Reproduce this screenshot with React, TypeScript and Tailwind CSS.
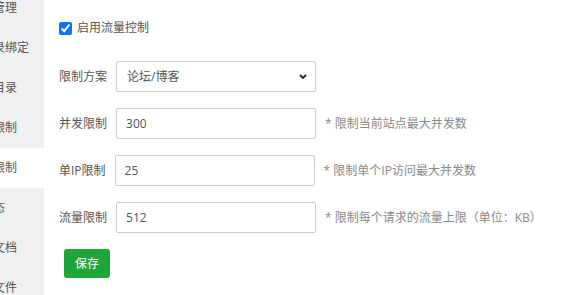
import React from "react";

const menu = ["域名管理", "子目录绑定", "网站目录", "访问限制", "流量限制", "伪静态", "默认文档", "配置文件"];

const rows = [
  { label: "并发限制", value: "300", hint: "* 限制当前站点最大并发数" },
  { label: "单IP限制", value: "25", hint: "* 限制单个IP访问最大并发数" },
  { label: "流量限制", value: "512", hint: "* 限制每个请求的流量上限（单位：KB）" },
];

export default function App() {
  return (
    <div
      className="flex w-[562px] h-[295px] overflow-hidden bg-white text-[12px] text-[#555]"
      style={{ fontFamily: '"Open Sans", "Noto Sans CJK SC", sans-serif' }}
    >
      {/* Left menu, scrolled off to the left */}
      <div className="w-[44px] shrink-0 overflow-hidden bg-[#f0f0f0]">
        <div className="-mt-[12px]">
          {menu.map((item, i) => (
            <div
              key={item}
              className={`h-[40px] flex items-center whitespace-nowrap -ml-[31px] ${
                i === 4 ? "bg-white w-[75px]" : ""
              }`}
            >
              {item}
            </div>
          ))}
        </div>
      </div>

      {/* Form */}
      <div className="flex-1 pt-[18px] pl-[15px]">
        <label className="h-[20px] flex items-center gap-[5px]">
          <input type="checkbox" defaultChecked className="w-[13px] h-[13px] m-0" />
          <span>启用流量控制</span>
        </label>

        <div className="mt-[23px] flex flex-col gap-[16px]">
          <div className="flex items-center h-[31px]">
            <span className="mr-[9px]">限制方案</span>
            <div className="relative w-[200px] h-[31px]">
              <select className="appearance-none w-full h-full border border-[#ccc] rounded-[2px] bg-white pl-[10px] text-[#555] outline-none">
                <option>论坛/博客</option>
              </select>
              <svg
                className="absolute right-[9px] top-[13px] pointer-events-none"
                width="8"
                height="5"
                viewBox="0 0 8 5"
              >
                <path d="M1 1l3 3 3-3" fill="none" stroke="#222" strokeWidth="1.8" />
              </svg>
            </div>
          </div>

          {rows.map((r) => (
            <div key={r.label} className="flex items-center h-[31px]">
              <span className="mr-[9px]">{r.label}</span>
              <input
                defaultValue={r.value}
                className="w-[200px] h-[31px] border border-[#ccc] rounded-[2px] px-[9px] text-[#555] outline-none"
              />
              <span className="ml-[9px] text-[#888]">{r.hint}</span>
            </div>
          ))}
        </div>

        <button className="mt-[16px] ml-[5px] w-[46px] h-[29px] rounded-[3px] bg-[#20a53a] text-white text-[12px]">
          保存
        </button>
      </div>
    </div>
  );
}
